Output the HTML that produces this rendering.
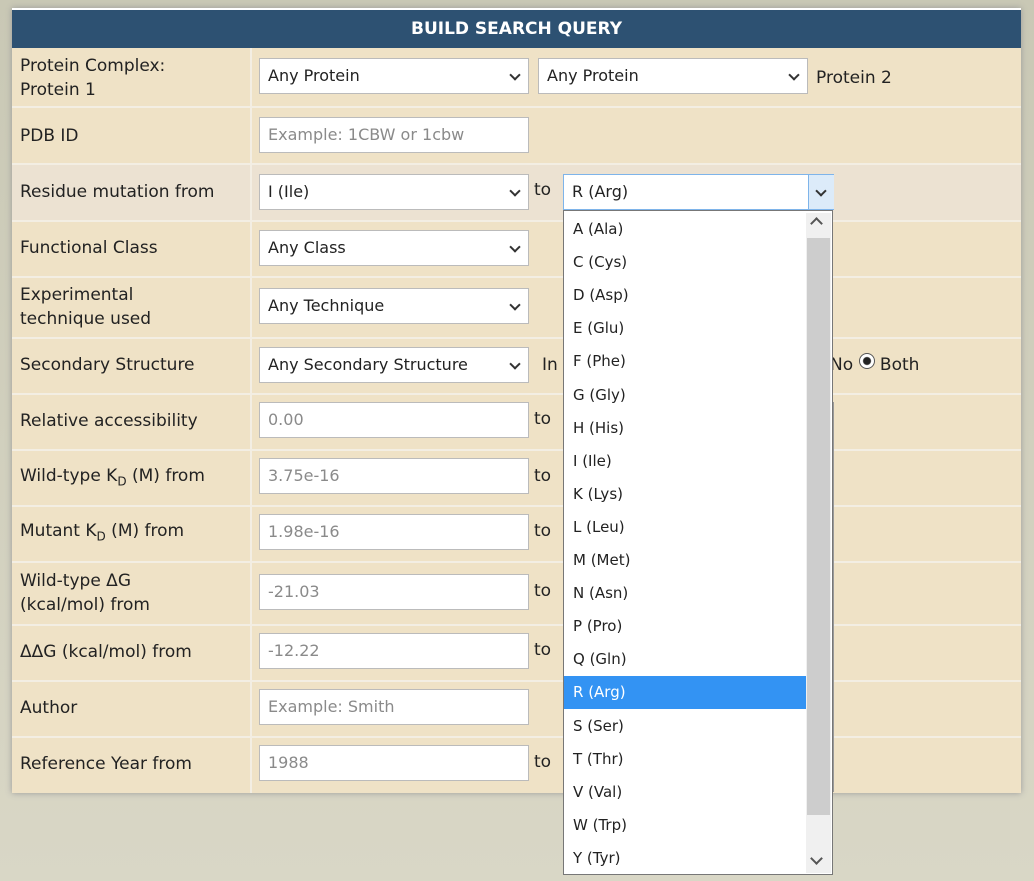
<!DOCTYPE html><html><head><style>
body{margin:0;width:1034px;height:881px;background:linear-gradient(#c9c8b5,#d9d7c6);position:relative;overflow:hidden;font-family:"DejaVu Sans","Liberation Sans",sans-serif;color:#222}
.a{position:absolute}
#panel{left:12px;top:8px;width:1009px;height:785px;background:#efe2c6;box-shadow:0 0 6px #999}
#hd{left:12px;top:8px;width:1009px;height:38px;background:#2d5172;color:#fff;font-weight:bold;font-size:17px;text-align:center;line-height:38px;border-top:2px solid #fff}
.row{position:absolute;left:12px;width:1009px;border-top:2px solid #f3eee3}
.lb{position:absolute;left:20px;font-size:17px;line-height:24px}
.sep{position:absolute;left:250px;width:2px;background:#f3eee3}
.in{position:absolute;height:36px;background:#fff;border:1px solid #bbb;box-sizing:border-box;font-size:16px;line-height:34px;padding-left:8px;color:#222}
.ph{color:#8a8a8a}
.sel::after{content:"";position:absolute;right:9px;top:12px;width:6px;height:6px;border-right:2px solid #333;border-bottom:2px solid #333;transform:rotate(45deg)}
.to{position:absolute;left:534px;font-size:17px}
#dd{left:563px;top:210px;width:270px;height:665px;background:#fff;border:1px solid #777;box-sizing:border-box}
.it{position:absolute;left:0;width:242px;height:33px;font-size:15px;line-height:33px;padding-left:9px;box-sizing:border-box}
</style></head><body>
<div class="a" id="panel"></div>
<div class="a" id="hd">BUILD SEARCH QUERY</div>
<div class="a" style="left:12px;top:164px;width:1009px;height:57px;background:#ece2d2"></div>
<div class="row" style="top:106px"></div><div class="row" style="top:163px"></div><div class="row" style="top:220px"></div><div class="row" style="top:276px"></div><div class="row" style="top:337px"></div><div class="row" style="top:393px"></div><div class="row" style="top:449px"></div><div class="row" style="top:505px"></div><div class="row" style="top:561px"></div><div class="row" style="top:624px"></div><div class="row" style="top:680px"></div><div class="row" style="top:736px"></div>
<div class="sep" style="top:48px;height:745px"></div>

<div class="lb" style="top:54px">Protein Complex:<br>Protein 1</div>
<div class="in sel" style="left:259px;top:58px;width:270px">Any Protein</div>
<div class="in sel" style="left:538px;top:58px;width:270px">Any Protein</div>
<div class="lb" style="left:816px;top:66px">Protein 2</div>

<div class="lb" style="top:124px">PDB ID</div>
<div class="in ph" style="left:259px;top:117px;width:270px">Example: 1CBW or 1cbw</div>

<div class="lb" style="top:180px">Residue mutation from</div>
<div class="in sel" style="left:259px;top:174px;width:270px">I (Ile)</div>
<div class="to" style="top:180px">to</div>
<div class="in" style="left:563px;top:174px;width:271px;border-color:#7eb4ea">R (Arg)</div>
<div class="a sel" style="left:808px;top:175px;width:25px;height:34px;background:#dcebf9;border-left:1px solid #7eb4ea"></div>

<div class="lb" style="top:236px">Functional Class</div>
<div class="in sel" style="left:259px;top:230px;width:270px">Any Class</div>

<div class="lb" style="top:283px">Experimental<br>technique used</div>
<div class="in sel" style="left:259px;top:288px;width:270px">Any Technique</div>

<div class="lb" style="top:353px">Secondary Structure</div>
<div class="in sel" style="left:259px;top:347px;width:270px">Any Secondary Structure</div>
<div class="lb" style="left:542px;top:353px">In</div>
<div class="lb" style="left:830px;top:353px">No <span style="display:inline-block;width:14px;height:14px;border:1px solid #555;border-radius:50%;background:radial-gradient(#222 35%,#fff 45%);vertical-align:1px"></span> Both</div>

<div class="lb" style="top:409px">Relative accessibility</div>
<div class="in ph" style="left:259px;top:402px;width:270px">0.00</div><div class="to" style="top:409px">to</div>

<div class="lb" style="top:464px">Wild-type K<sub style="font-size:12px">D</sub> (M) from</div>
<div class="in ph" style="left:259px;top:458px;width:270px">3.75e-16</div><div class="to" style="top:466px">to</div>

<div class="lb" style="top:519px">Mutant K<sub style="font-size:12px">D</sub> (M) from</div>
<div class="in ph" style="left:259px;top:514px;width:270px">1.98e-16</div><div class="to" style="top:521px">to</div>

<div class="lb" style="top:569px">Wild-type ΔG<br>(kcal/mol) from</div>
<div class="in ph" style="left:259px;top:574px;width:270px">-21.03</div><div class="to" style="top:581px">to</div>

<div class="lb" style="top:640px">ΔΔG (kcal/mol) from</div>
<div class="in ph" style="left:259px;top:633px;width:270px">-12.22</div><div class="to" style="top:640px">to</div>

<div class="lb" style="top:696px">Author</div>
<div class="in ph" style="left:259px;top:689px;width:270px">Example: Smith</div>

<div class="lb" style="top:752px">Reference Year from</div>
<div class="in ph" style="left:259px;top:745px;width:270px">1988</div><div class="to" style="top:752px">to</div>

<div class="a" style="left:831px;top:402px;width:3px;height:390px;background:#999"></div>

<div class="a" id="dd">
<div class="a" style="left:242px;top:2px;width:25px;height:660px;background:#f0f0f0"></div>
<div class="a" style="left:243px;top:27px;width:23px;height:577px;background:#cdcdcd"></div>
<div class="a" style="left:248px;top:8px;width:7px;height:7px;border-left:2px solid #555;border-top:2px solid #555;transform:rotate(45deg)"></div>
<div class="a" style="left:248px;top:643px;width:7px;height:7px;border-right:2px solid #555;border-bottom:2px solid #555;transform:rotate(45deg)"></div>
<div class="it" style="top:2px">A (Ala)</div><div class="it" style="top:35px">C (Cys)</div><div class="it" style="top:68px">D (Asp)</div><div class="it" style="top:101px">E (Glu)</div><div class="it" style="top:134px">F (Phe)</div><div class="it" style="top:168px">G (Gly)</div><div class="it" style="top:201px">H (His)</div><div class="it" style="top:234px">I (Ile)</div><div class="it" style="top:267px">K (Lys)</div><div class="it" style="top:300px">L (Leu)</div><div class="it" style="top:333px">M (Met)</div><div class="it" style="top:366px">N (Asn)</div><div class="it" style="top:399px">P (Pro)</div><div class="it" style="top:432px">Q (Gln)</div><div class="it" style="top:465px;background:#3393f3;color:#fff">R (Arg)</div><div class="it" style="top:499px">S (Ser)</div><div class="it" style="top:532px">T (Thr)</div><div class="it" style="top:565px">V (Val)</div><div class="it" style="top:598px">W (Trp)</div><div class="it" style="top:631px">Y (Tyr)</div>
</div>
</body></html>
